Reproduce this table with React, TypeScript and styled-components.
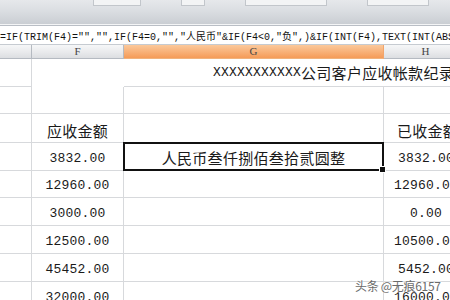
import styled, { createGlobalStyle } from "styled-components";

const GlobalStyle = createGlobalStyle`
  html, body {
    margin: 0;
    padding: 0;
    background: #ffffff;
  }
  body {
    font-family: "Liberation Mono", "Noto Sans CJK SC", monospace;
  }
`;

const FORMULA =
  '=IF(TRIM(F4)="","",IF(F4=0,"","人民币"&IF(F4<0,"负",)&IF(INT(F4),TEXT(INT(ABS(F4)),"[dbnum2]")';

// rows after the header row: F value, H value
const rows: { f: string; h: string; heightPx: number }[] = [
  { f: "3832.00", h: "3832.00", heightPx: 28 },
  { f: "12960.00", h: "12960.00", heightPx: 27 },
  { f: "3000.00", h: "0.00", heightPx: 28 },
  { f: "12500.00", h: "10500.00", heightPx: 28 },
  { f: "45452.00", h: "5452.00", heightPx: 28 },
  { f: "32000.00", h: "16000.00", heightPx: 28 },
];

export default function App() {
  return (
    <Screen>
      <GlobalStyle />
      <Ribbon>
        <RibbonBox $w={46} />
        <RibbonBox $w={22} />
        <RibbonBox $w={80} />
        <RibbonBox $w={60} />
      </Ribbon>
      <FormulaBar>
        <FormulaText>{FORMULA}</FormulaText>
      </FormulaBar>

      <Sheet>
        <ColHead />
        <ColHead>F</ColHead>
        <ColHead $active>G</ColHead>
        <ColHead>H</ColHead>

        {/* row 1: title */}
        <Cell $h={28} />
        <TitleCell $h={28}>
          XXXXXXXXXXX<Cjk>公司客户应收帐款纪录</Cjk>
        </TitleCell>

        {/* row 2: blank */}
        <Cell $h={27} />
        <Cell $h={27} />
        <Cell $h={27} />
        <Cell $h={27} />

        {/* row 3: headers */}
        <Cell $h={29} />
        <Cell $h={29}>
          <Cjk>应收金额</Cjk>
        </Cell>
        <Cell $h={29} />
        <Cell $h={29} $shift={-4}>
          <Cjk>已收金额</Cjk>
        </Cell>

        {rows.map((r, i) => (
          <Row key={r.f} r={r} selected={i === 0} />
        ))}
      </Sheet>

      <Watermark>头条 @无痕6157</Watermark>
    </Screen>
  );
}

function Row({ r, selected }: { r: { f: string; h: string; heightPx: number }; selected: boolean }) {
  return (
    <>
      <Cell $h={r.heightPx} />
      <Cell $h={r.heightPx}>{r.f}</Cell>
      {selected ? (
        <SelectedCell $h={r.heightPx}>
          <Cjk>人民币叁仟捌佰叁拾贰圆整</Cjk>
          <FillHandle />
        </SelectedCell>
      ) : (
        <Cell $h={r.heightPx} />
      )}
      <Cell $h={r.heightPx} $shift={-1}>{r.h}</Cell>
    </>
  );
}

/* ============================= styles ============================= */

const Screen = styled.div`
  width: 450px;
  height: 300px;
  position: relative;
  overflow: hidden;
  background: #fff;
`;

const Ribbon = styled.div`
  height: 24px;
  display: flex;
  gap: 40px;
  padding-left: 93px;
  align-items: flex-start;
  background: linear-gradient(#e6e8eb 0%, #dcdfe3 40%, #caced3 100%);
  border-bottom: 1px solid #f4f5f6;
`;

const RibbonBox = styled.div<{ $w: number }>`
  width: ${(p) => p.$w}px;
  height: 5px;
  background: #f3f4f5;
  border: 1px solid #c2c6cb;
  border-top: none;
`;

const FormulaBar = styled.div`
  height: 18px;
  background: #ffffff;
  border-top: 1px solid #b9bec5;
  border-bottom: 1px solid #c6cbd1;
  display: flex;
  align-items: center;
  overflow: hidden;
`;

const FormulaText = styled.div`
  white-space: nowrap;
  font-size: 10px;
  color: #111;
`;

const Sheet = styled.div`
  display: grid;
  grid-template-columns: 32px 92px 260px 84px;
  width: 468px;
`;

const ColHead = styled.div<{ $active?: boolean }>`
  height: 13px;
  border-right: 1px solid ${(p) => (p.$active ? "#f2a56b" : "#b5bac1")};
  border-bottom: 1px solid ${(p) => (p.$active ? "#f0b27c" : "#b5bac1")};
  background: ${(p) =>
    p.$active
      ? "linear-gradient(#fbc99b 0%, #f8b27a 50%, #f59b58 100%)"
      : "linear-gradient(#f6f7f8 0%, #e9eaec 55%, #dcdee1 100%)"};
  color: #444;
  font-family: "Liberation Serif", serif;
  font-size: 11px;
  line-height: 13px;
  text-align: center;
`;

const Cell = styled.div<{ $h: number; $shift?: number }>`
  box-sizing: border-box;
  height: ${(p) => p.$h}px;
  border-right: 1px solid #d7d9dc;
  border-bottom: 1px solid #d7d9dc;
  display: flex;
  align-items: flex-end;
  justify-content: center;
  padding-bottom: 3px;
  padding-left: ${(p) => (p.$shift ? p.$shift * -1 : 0)}px;
  font-size: 13px;
  line-height: 16px;
  color: #1a1a1a;
  letter-spacing: 0.2px;
  white-space: nowrap;
`;

const TitleCell = styled(Cell)`
  grid-column: 3 / span 2;
  justify-content: flex-start;
  align-items: center;
  padding: 0 0 0 89px;
  border-right: none;
  overflow: hidden;
`;

const SelectedCell = styled(Cell)`
  position: relative;
  border: 2px solid #111;
  margin: -1px 0 0 -1px;
  height: ${(p) => p.$h + 1}px;
`;

const FillHandle = styled.div`
  position: absolute;
  right: -4px;
  bottom: -4px;
  width: 5px;
  height: 5px;
  background: #111;
  border: 1px solid #fff;
`;

const Cjk = styled.span`
  font-family: "Noto Sans CJK SC", sans-serif;
  font-size: 15px;
  letter-spacing: 0.3px;
  line-height: 16px;
`;

const Watermark = styled.div`
  position: absolute;
  left: 355px;
  top: 277px;
  font-family: "Noto Sans CJK SC", sans-serif;
  font-size: 12px;
  letter-spacing: -0.3px;
  color: #6b6b6b;
  text-shadow: 0 0 2px #fff, 0 0 2px #fff;
  white-space: nowrap;
`;
